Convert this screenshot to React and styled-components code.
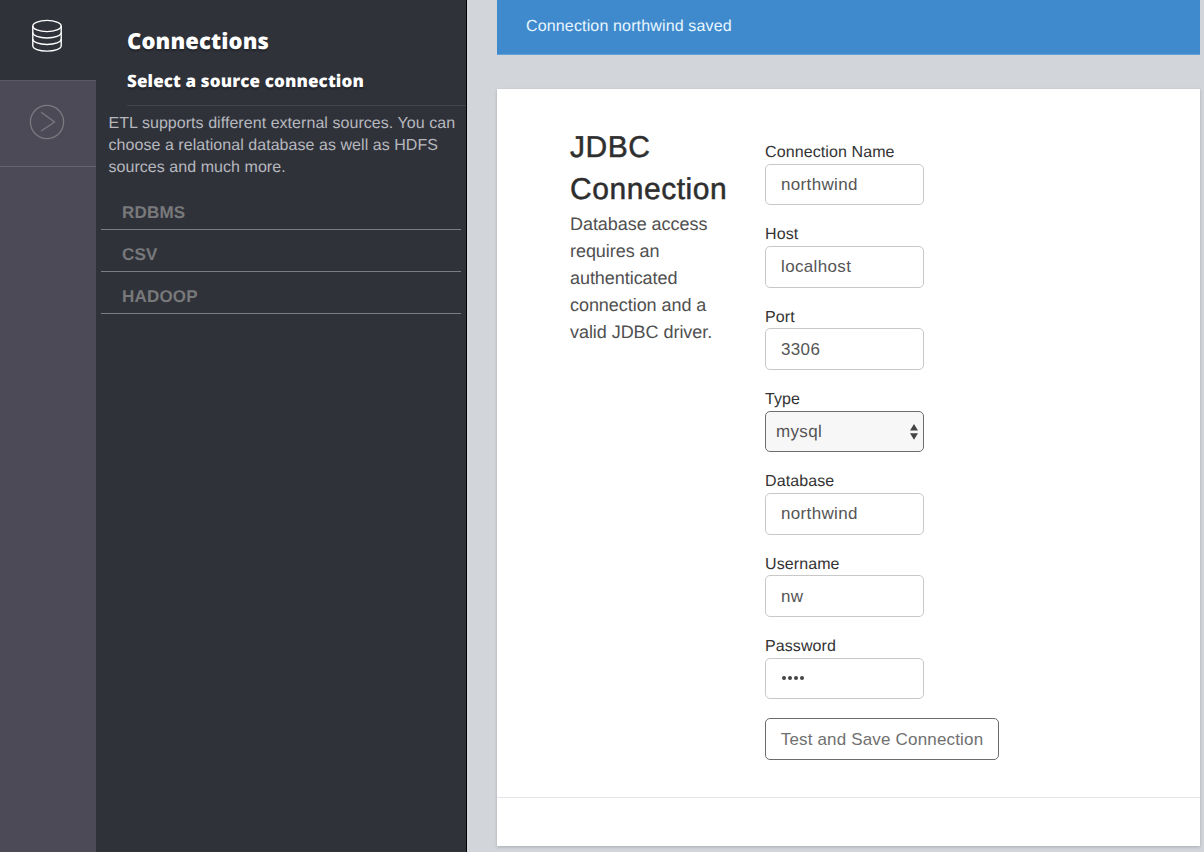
import React from "react";
import styled, { createGlobalStyle } from "styled-components";

const GlobalStyle = createGlobalStyle`
  *, *::before, *::after { box-sizing: border-box; }
  body {
    margin: 0;
    overflow: hidden;
    background: #d2d5da;
    font-family: "Liberation Sans", Arial, sans-serif;
    text-rendering: geometricPrecision;
  }
`;

const Page = styled.div`
  display: flex;
  height: 852px;
  overflow: hidden;
`;

const Rail = styled.nav`
  width: 96px;
  flex: none;
  background: #4d4a57;
`;

const RailItem = styled.div`
  display: flex;
  justify-content: center;
  height: ${(p) => p.$height}px;
  padding-top: ${(p) => p.$top}px;
  padding-right: 2px;
  background: ${(p) => (p.$active ? "#30323a" : "transparent")};
  border-bottom: 1px solid ${(p) => (p.$active ? "#595762" : "#66636e")};
`;

const Sidebar = styled.aside`
  width: 371px;
  flex: none;
  background: #30323a;
  border-right: 1px solid #000;
`;

const SidebarHeader = styled.header`
  height: 106px;
  margin-left: 31px;
  padding-top: 25px;
  border-bottom: 1px solid #43454d;
  color: #fff;
  font-family: "Open Sans", sans-serif;
  text-shadow: 0 2px 2px rgba(0, 0, 0, 0.3);
`;

const SidebarTitle = styled.h1`
  margin: 0;
  font-size: 22px;
  line-height: 32px;
  font-weight: 800;
  letter-spacing: 0.13px;
`;

const SidebarSubtitle = styled.h2`
  margin: 12px 0 0;
  font-size: 17px;
  line-height: 24px;
  font-weight: 800;
  letter-spacing: 0.12px;
`;

const Intro = styled.p`
  margin: 7px 0 0 12.5px;
  color: #b6b8be;
  font-size: 16px;
  line-height: 22px;
  letter-spacing: 0.05px;
  white-space: nowrap;
`;

const SourceList = styled.ul`
  margin: 9px 5px 0;
  padding: 0;
  list-style: none;
`;

const SourceItem = styled.li`
  height: 41.9px;
  padding: 14.4px 0 0 21px;
  border-bottom: 1px solid #7b7d84;
  color: #78797b;
  font-size: 17px;
  line-height: 22px;
  font-weight: 700;
  letter-spacing: 0.2px;
`;

const Main = styled.main`
  flex: 1;
  padding: 0 4px 0 30px;
`;

const Alert = styled.div`
  height: 55px;
  padding: 15px 29px 13px;
  background: #3f8acd;
  border-bottom: 1px solid #62a0d8;
  color: #e9f6ff;
  font-size: 16px;
  line-height: 24px;
  letter-spacing: 0.15px;
`;

const Card = styled.section`
  height: 757px;
  margin-top: 34px;
  background: #fff;
  box-shadow: 0 1px 3px rgba(0, 0, 0, 0.2);
`;

const CardBody = styled.div`
  display: flex;
  height: 709px;
  padding-left: 73px;
  border-bottom: 1px solid #e3e5e8;
`;

const Description = styled.div`
  width: 195px;
  padding-top: 38px;
  color: #333;
`;

const CardTitle = styled.h2`
  width: 160px;
  margin: 0;
  font-size: 30px;
  line-height: 42px;
  font-weight: 400;
  letter-spacing: 0.55px;
  color: #2e2e2e;
  -webkit-text-stroke: 0.5px #2e2e2e;
`;

const CardText = styled.p`
  width: 160px;
  margin: 0;
  color: #505050;
  font-size: 18px;
  line-height: 27px;
  letter-spacing: -0.05px;
`;

const Form = styled.form`
  padding-top: 52px;
`;

const Field = styled.div`
  height: 82.33px;
`;

const Label = styled.label`
  display: block;
  height: 22.7px;
  color: #333;
  font-size: 16px;
  line-height: 24px;
  letter-spacing: 0.1px;
`;

const Input = styled.input`
  display: block;
  width: 159px;
  height: 41.6px;
  padding: 1px 15px 0;
  border: 1px solid #c8c8c8;
  border-radius: 5px;
  background: #fff;
  color: #555;
  font: 17px/24px "Liberation Sans", Arial, sans-serif;
  letter-spacing: 0.35px;
`;

const SelectBox = styled.div`
  display: flex;
  align-items: center;
  justify-content: space-between;
  width: 159px;
  height: 41.6px;
  padding: 1px 5px 0 10px;
  border: 1px solid #6e6e6e;
  border-radius: 5px;
  background: #f7f7f7;
  color: #555;
  font-size: 17px;
  letter-spacing: 0.35px;
`;

const PasswordBox = styled.div`
  display: flex;
  align-items: center;
  gap: 2px;
  width: 159px;
  height: 41.6px;
  padding-left: 16px;
  border: 1px solid #c8c8c8;
  border-radius: 5px;
`;

const Dot = styled.i`
  width: 4px;
  height: 4px;
  border-radius: 50%;
  background: #444;
`;

const SubmitButton = styled.button`
  display: block;
  width: 234px;
  height: 42px;
  margin-top: 0.7px;
  padding: 2px 0 0;
  border: 1px solid #6c6c6c;
  border-radius: 5px;
  background: #fff;
  color: #707070;
  font: 17px/24px "Liberation Sans", Arial, sans-serif;
  letter-spacing: 0.17px;
  white-space: nowrap;
`;

const DatabaseIcon = () => (
  <svg width="32" height="34" viewBox="0 0 32 34" fill="none" stroke="#fff" strokeWidth="1.4">
    <ellipse cx="16" cy="7" rx="14.2" ry="5.6" />
    <path d="M1.8 7v19.7c0 3.1 6.3 5.4 14.2 5.4s14.2-2.3 14.2-5.4V7" />
    <path d="M1.8 13.6c0 3.1 6.3 5.4 14.2 5.4s14.2-2.3 14.2-5.4M1.8 20.1c0 3.1 6.3 5.4 14.2 5.4s14.2-2.3 14.2-5.4" />
  </svg>
);

const NextIcon = () => (
  <svg width="36" height="36" viewBox="0 0 36 36" fill="none" stroke="#7b7880" strokeWidth="1.3">
    <circle cx="18" cy="18" r="16.6" />
    <path d="M12.2 8.3L25.5 18L12.2 27" />
  </svg>
);

const SelectArrows = () => (
  <svg width="8" height="16" viewBox="0 0 8 16" fill="#444">
    <path d="M4 0L8 6.5H0ZM0 9.2H8L4 15.7Z" />
  </svg>
);

const sources = ["RDBMS", "CSV", "HADOOP"];

const fields = [
  { label: "Connection Name", value: "northwind" },
  { label: "Host", value: "localhost" },
  { label: "Port", value: "3306" },
  { label: "Type", value: "mysql", kind: "select" },
  { label: "Database", value: "northwind" },
  { label: "Username", value: "nw" },
  { label: "Password", kind: "password" },
];

function Control({ kind, value, label }) {
  if (kind === "select") {
    return (
      <SelectBox>
        {value}
        <SelectArrows />
      </SelectBox>
    );
  }
  if (kind === "password") {
    return (
      <PasswordBox>
        <Dot /><Dot /><Dot /><Dot />
      </PasswordBox>
    );
  }
  return <Input defaultValue={value} aria-label={label} />;
}

export default function App() {
  return (
    <>
      <GlobalStyle />
      <Page>
        <Rail>
          <RailItem $active $height={81} $top={19}><DatabaseIcon /></RailItem>
          <RailItem $height={86} $top={23}><NextIcon /></RailItem>
        </Rail>
        <Sidebar>
          <SidebarHeader>
            <SidebarTitle>Connections</SidebarTitle>
            <SidebarSubtitle>Select a source connection</SidebarSubtitle>
          </SidebarHeader>
          <Intro>
            ETL supports different external sources. You can<br />
            choose a relational database as well as HDFS<br />
            sources and much more.
          </Intro>
          <SourceList>
            {sources.map((s) => <SourceItem key={s}>{s}</SourceItem>)}
          </SourceList>
        </Sidebar>
        <Main>
          <Alert>Connection northwind saved</Alert>
          <Card>
            <CardBody>
              <Description>
                <CardTitle>JDBC<br />Connection</CardTitle>
                <CardText>
                  Database access<br />requires an<br />authenticated<br />connection and a<br />valid JDBC driver.
                </CardText>
              </Description>
              <Form>
                {fields.map((f) => (
                  <Field key={f.label}>
                    <Label>{f.label}</Label>
                    <Control {...f} />
                  </Field>
                ))}
                <SubmitButton type="button">Test and Save Connection</SubmitButton>
              </Form>
            </CardBody>
          </Card>
        </Main>
      </Page>
    </>
  );
}
